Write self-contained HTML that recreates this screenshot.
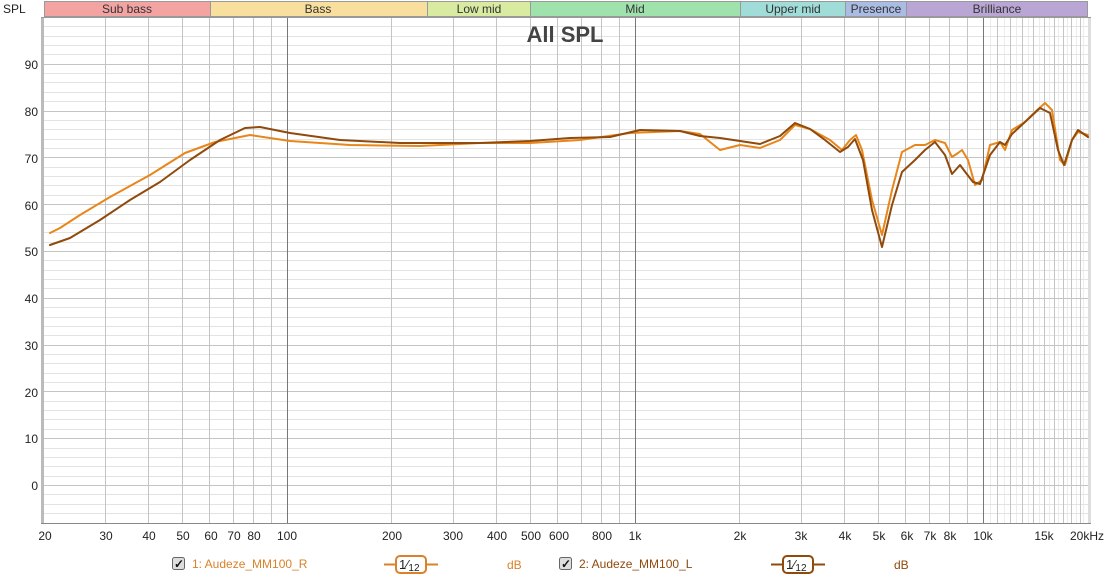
<!DOCTYPE html>
<html><head><meta charset="utf-8"><style>
html,body{margin:0;padding:0;background:#fff;width:1110px;height:579px;overflow:hidden}
svg{display:block;font-family:"Liberation Sans",sans-serif}
</style></head><body>
<svg width="1110" height="579" xmlns="http://www.w3.org/2000/svg">
<rect width="1110" height="579" fill="#fff"/>
<text x="3" y="13" font-size="12" fill="#222">SPL</text>
<g stroke="#999" stroke-width="1">
<rect x="44.5" y="1.5" width="166" height="15" fill="#f4a3a3"/>
<rect x="210.5" y="1.5" width="217" height="15" fill="#f8df9e"/>
<rect x="427.5" y="1.5" width="103" height="15" fill="#d8eba0"/>
<rect x="530.5" y="1.5" width="210" height="15" fill="#a0e2ac"/>
<rect x="740.5" y="1.5" width="105" height="15" fill="#a0dcd8"/>
<rect x="845.5" y="1.5" width="61" height="15" fill="#aabce3"/>
<rect x="906.5" y="1.5" width="181" height="15" fill="#baa6d4"/>
</g>
<g font-size="12" fill="#333" text-anchor="middle">
<text x="127" y="13">Sub bass</text><text x="318" y="13">Bass</text><text x="479" y="13">Low mid</text><text x="635" y="13">Mid</text><text x="793" y="13">Upper mid</text><text x="876" y="13">Presence</text><text x="997" y="13">Brilliance</text>
</g>
<g fill="none" stroke-width="1">
<path stroke="#ececec" d="M990.5 18V523M1004.5 18V523M1016.5 18V523M1028.5 18V523M1039.5 18V523M1049.5 18V523M1058.5 18V523M1067.5 18V523M1076.5 18V523M1083.5 18V523"/>
<path stroke="#e3e3e3" d="M44 26.5H1088M44 36.5H1088M44 45.5H1088M44 54.5H1088M44 73.5H1088M44 82.5H1088M44 92.5H1088M44 101.5H1088M44 120.5H1088M44 129.5H1088M44 139.5H1088M44 148.5H1088M44 167.5H1088M44 176.5H1088M44 185.5H1088M44 195.5H1088M44 214.5H1088M44 223.5H1088M44 232.5H1088M44 242.5H1088M44 260.5H1088M44 270.5H1088M44 279.5H1088M44 288.5H1088M44 307.5H1088M44 317.5H1088M44 326.5H1088M44 335.5H1088M44 354.5H1088M44 363.5H1088M44 373.5H1088M44 382.5H1088M44 401.5H1088M44 410.5H1088M44 419.5H1088M44 429.5H1088M44 448.5H1088M44 457.5H1088M44 466.5H1088M44 476.5H1088M44 494.5H1088M44 504.5H1088M44 513.5H1088"/>
<path stroke="#c4c4c4" d="M44 64.5H1088M44 111.5H1088M44 157.5H1088M44 204.5H1088M44 251.5H1088M44 298.5H1088M44 345.5H1088M44 391.5H1088M44 438.5H1088M44 485.5H1088"/>
<path stroke="#c4c4c4" d="M105.5 18V523M148.5 18V523M182.5 18V523M209.5 18V523M233.5 18V523M253.5 18V523M271.5 18V523M391.5 18V523M453.5 18V523M496.5 18V523M530.5 18V523M557.5 18V523M581.5 18V523M601.5 18V523M619.5 18V523M739.5 18V523M801.5 18V523M844.5 18V523M878.5 18V523M905.5 18V523M929.5 18V523M949.5 18V523M967.5 18V523M997.5 18V523M1010.5 18V523M1022.5 18V523M1033.5 18V523M1044.5 18V523M1054.5 18V523M1063.5 18V523M1071.5 18V523M1080.5 18V523"/>
<path stroke="#777" d="M287.5 18V523M635.5 18V523M983.5 18V523"/>
</g>
<rect x="41" y="17" width="3" height="507" fill="#bbb"/>
<rect x="1088" y="17" width="3" height="507" fill="#ddd"/>
<line x1="41" y1="523.5" x2="1091" y2="523.5" stroke="#888"/>
<line x1="41" y1="17.5" x2="1091" y2="17.5" stroke="#999"/>
<text x="565" y="42" font-size="22" font-weight="bold" fill="#444" text-anchor="middle">All SPL</text>
<g font-size="12" fill="#222" text-anchor="end">
<text x="38" y="69">90</text><text x="38" y="116">80</text><text x="38" y="163">70</text><text x="38" y="210">60</text><text x="38" y="256">50</text><text x="38" y="303">40</text><text x="38" y="350">30</text><text x="38" y="397">20</text><text x="38" y="443">10</text><text x="38" y="490">0</text>
</g>
<g font-size="12" fill="#222" text-anchor="middle">
<text x="45" y="540">20</text><text x="106" y="540">30</text><text x="149" y="540">40</text><text x="183" y="540">50</text><text x="211" y="540">60</text><text x="234" y="540">70</text><text x="254" y="540">80</text><text x="287" y="540">100</text><text x="392" y="540">200</text><text x="453" y="540">300</text><text x="497" y="540">400</text><text x="531" y="540">500</text><text x="559" y="540">600</text><text x="602" y="540">800</text><text x="635" y="540">1k</text><text x="740" y="540">2k</text><text x="801" y="540">3k</text><text x="845" y="540">4k</text><text x="879" y="540">5k</text><text x="907" y="540">6k</text><text x="930" y="540">7k</text><text x="950" y="540">8k</text><text x="983" y="540">10k</text><text x="1044" y="540">15k</text><text x="1087" y="540">20kHz</text>
</g>
<g fill="none" stroke-width="2" stroke-linejoin="round" stroke-linecap="round">
<polyline stroke="#e8861a" points="50,233 60,228 80,215 110,197 150,175 185,153 215,142 250,135 290,141 350,145 420,146 480,143 530,143 580,140 630,133 680,131 700,134 720,150 740,145 760,148 780,140 795,125 810,129 830,140 842,150 850,140 856,135 862,150 872,200 882,235 892,190 902,152 915,145 925,145 935,140 945,143 952,157 958,153 962,150 968,160 975,185 982,180 990,145 1000,142 1005,150 1012,130 1025,122 1035,112 1045,103 1052,110 1060,160 1065,165 1072,140 1078,132 1088,135"/>
<polyline stroke="#8f4a0c" points="50,245 70,238 100,220 130,200 160,182 190,160 220,140 245,128 260,127 290,133 340,140 400,143 480,143 530,141 570,138 610,137 640,130 680,131 700,136 720,138 740,141 760,144 780,136 795,123 810,129 825,140 840,152 848,147 855,139 863,160 872,210 882,247 892,205 902,172 915,160 925,150 935,142 945,155 952,174 960,165 966,173 973,182 980,184 990,155 1000,142 1005,145 1012,134 1025,122 1040,108 1050,113 1058,150 1064,165 1072,140 1078,130 1088,137"/>
</g>
<g font-size="12">
<rect x="172.5" y="557.5" width="12" height="12" rx="2" fill="#ddd" stroke="#666"/><text x="174" y="568" font-weight="bold" fill="#111">✓</text>
<text x="192" y="568" fill="#d9822b">1: Audeze_MM100_R</text>
<line x1="384" y1="564.5" x2="438" y2="564.5" stroke="#d9822b" stroke-width="2"/>
<rect x="396" y="556" width="30" height="17" rx="4" fill="#fff" stroke="#d9822b" stroke-width="2"/>
<text x="399" y="569" font-size="13" fill="#222">1⁄<tspan font-size="10" dy="2">12</tspan></text>
<text x="507" y="569" fill="#d9822b">dB</text>
<rect x="559.5" y="557.5" width="12" height="12" rx="2" fill="#ddd" stroke="#666"/><text x="561" y="568" font-weight="bold" fill="#111">✓</text>
<text x="579" y="568" fill="#8f4a0c">2: Audeze_MM100_L</text>
<line x1="771" y1="564.5" x2="825" y2="564.5" stroke="#8f4a0c" stroke-width="2"/>
<rect x="783" y="556" width="30" height="17" rx="4" fill="#fff" stroke="#8f4a0c" stroke-width="2"/>
<text x="786" y="569" font-size="13" fill="#222">1⁄<tspan font-size="10" dy="2">12</tspan></text>
<text x="894" y="569" fill="#8f4a0c">dB</text>
</g>
</svg>
</body></html>
